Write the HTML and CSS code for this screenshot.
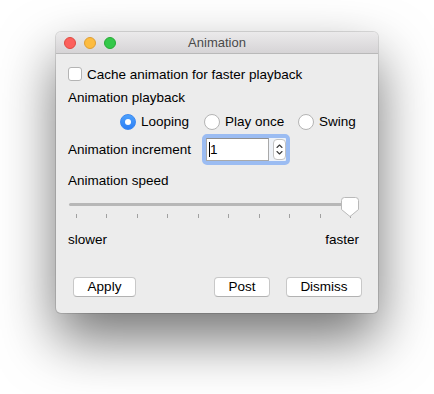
FILE: index.html
```html
<!DOCTYPE html>
<html>
<head>
<meta charset="utf-8">
<link rel="stylesheet" href="styles.css">
</head>
<body>
<div class="window">
  <div class="titlebar">
    <div class="lights">
      <span class="light red"></span>
      <span class="light yellow"></span>
      <span class="light green"></span>
    </div>
    <div class="title">Animation</div>
  </div>
  <div class="content">
    <div class="check-row">
      <span class="checkbox"></span>
      <span class="label">Cache animation for faster playback</span>
    </div>
    <div class="text-line playback">Animation playback</div>
    <div class="radios">
      <div class="radio-item"><span class="radio on"></span><span>Looping</span></div>
      <div class="radio-item"><span class="radio"></span><span>Play once</span></div>
      <div class="radio-item"><span class="radio"></span><span>Swing</span></div>
    </div>
    <div class="incr-row">
      <span class="incr-label">Animation increment</span>
      <div class="ring">
        <div class="field"><span class="caret-text">1</span></div>
        <div class="stepper">
          <svg width="11" height="19" viewBox="0 0 11 19">
            <path d="M3 7.5 L5.5 5 L8 7.5" fill="none" stroke="#3a3a3a" stroke-width="1.1" stroke-linecap="round" stroke-linejoin="round"/>
            <path d="M3 11.5 L5.5 14 L8 11.5" fill="none" stroke="#3a3a3a" stroke-width="1.1" stroke-linecap="round" stroke-linejoin="round"/>
          </svg>
        </div>
      </div>
    </div>
    <div class="text-line speed">Animation speed</div>
    <div class="slider">
      <div class="track"></div>
      <div class="ticks">
        <span></span><span></span><span></span><span></span><span></span>
        <span></span><span></span><span></span><span></span><span></span>
      </div>
      <svg class="thumb" width="18" height="21" viewBox="0 0 18 21">
        <path d="M3.5 0.5 H14.5 Q17.5 0.5 17.5 3.5 V12.5 L9 19.5 L0.5 12.5 V3.5 Q0.5 0.5 3.5 0.5 Z" fill="#ffffff" stroke="#b9b9b9" stroke-width="1"/>
      </svg>
    </div>
    <div class="scale-labels">
      <span>slower</span>
      <span>faster</span>
    </div>
    <div class="buttons">
      <button class="btn apply">Apply</button>
      <div class="btn-group">
        <button class="btn post">Post</button>
        <button class="btn dismiss">Dismiss</button>
      </div>
    </div>
  </div>
</div>
</body>
</html>
```

FILE: styles.css
```css
html, body {
  margin: 0;
  padding: 0;
  background: #ffffff;
}
html {
  height: 394px;
  overflow: hidden;
}
body {
  box-sizing: border-box;
  height: 394px;
  font-family: "Liberation Sans", Arial, sans-serif;
  font-size: 13.5px;
  color: #000000;
  padding: 32px 0 0 56px;
}
.window {
  width: 322px;
  height: 281px;
  box-sizing: border-box;
  background: #ececec;
  border-radius: 5px;
  overflow: hidden;
  box-shadow: 0 0 0 1px rgba(0,0,0,0.12), 0 26px 55px rgba(0,0,0,0.55);
}
.titlebar {
  height: 21px;
  border-bottom: 1px solid #b9b9b9;
  background: linear-gradient(#ebeaeb, #d6d4d6);
  display: flex;
  align-items: center;
  position: relative;
}
.lights {
  display: flex;
  gap: 8px;
  padding-left: 8px;
  padding-top: 1px;
}
.light {
  width: 12px;
  height: 12px;
  border-radius: 50%;
  box-sizing: border-box;
}
.red { background: #fc605c; border: 1px solid #de4a41; }
.yellow { background: #fdbc40; border: 1px solid #de9e34; }
.green { background: #34c84a; border: 1px solid #27aa35; }
.title {
  position: absolute;
  left: 0;
  right: 0;
  top: 0;
  height: 21px;
  line-height: 21px;
  text-align: center;
  color: #4a4a4a;
  font-size: 13px;
}
.content {
  padding: 0 12px;
}
.check-row {
  margin-top: 13px;
  display: flex;
  align-items: flex-start;
  height: 16px;
  line-height: 16px;
}
.checkbox {
  width: 14px;
  height: 14px;
  box-sizing: border-box;
  background: #ffffff;
  border: 1px solid #b4b4b4;
  border-radius: 3px;
  margin-right: 5px;
}
.text-line {
  line-height: 16px;
}
.playback { margin-top: 7px; }
.radios {
  margin-top: 8px;
  padding-left: 52px;
  display: grid;
  grid-template-columns: 84px 94px auto;
  line-height: 16px;
}
.radio-item {
  display: flex;
  align-items: center;
}
.radio {
  width: 16px;
  height: 16px;
  box-sizing: border-box;
  border-radius: 50%;
  background: #ffffff;
  border: 1px solid #b4b4b4;
  margin-right: 5px;
  position: relative;
}
.radio.on {
  background: linear-gradient(#4da1fc, #2d7ff5);
  border: 1px solid #3c88f0;
}
.radio.on::after {
  content: "";
  position: absolute;
  left: 4px;
  top: 4px;
  width: 6px;
  height: 6px;
  border-radius: 50%;
  background: #ffffff;
}
.incr-row {
  margin-top: 4px;
  display: flex;
  align-items: center;
  height: 31px;
}
.incr-label {
  width: 134px;
  line-height: 16px;
}
.ring {
  width: 88px;
  height: 31px;
  box-sizing: border-box;
  border: 4px solid #9bbcf2;
  border-radius: 5px;
  background: #eef2f8;
  display: flex;
  align-items: center;
}
.field {
  width: 63px;
  height: 23px;
  box-sizing: border-box;
  background: #ffffff;
  border: 1px solid #a9a9a9;
  border-top-color: #8f8f8f;
  line-height: 21px;
  padding-left: 2px;
}
.caret-text {
  border-left: 1px solid #000;
}
.stepper {
  margin-left: 4px;
  width: 13px;
  height: 21px;
  box-sizing: border-box;
  background: #ffffff;
  border: 1px solid #c2c2c2;
  border-radius: 4px;
  display: flex;
  align-items: center;
  justify-content: center;
}
.speed { margin-top: 8px; }
.slider {
  position: relative;
  margin-top: 4px;
  width: 291px;
  height: 29px;
}
.track {
  position: absolute;
  left: 1px;
  right: 2px;
  top: 10px;
  height: 3px;
  border-radius: 2px;
  background: #b7b7b7;
}
.ticks {
  position: absolute;
  left: 8px;
  right: 8px;
  top: 21px;
  display: flex;
  justify-content: space-between;
}
.ticks span {
  width: 1px;
  height: 4px;
  background: #a0a0a0;
}
.thumb {
  position: absolute;
  right: 0;
  top: 4px;
}
.scale-labels {
  margin-top: 10px;
  width: 291px;
  display: flex;
  justify-content: space-between;
  line-height: 16px;
}
.buttons {
  margin-top: 29px;
  display: flex;
  justify-content: space-between;
  padding-left: 5px;
  width: 289px;
}
.btn-group {
  display: flex;
  gap: 16px;
}
.btn {
  font-family: "Liberation Sans", Arial, sans-serif;
  font-size: 13.5px;
  color: #000;
  height: 20px;
  padding: 0;
  box-sizing: border-box;
  background: #ffffff;
  border: 1px solid #c8c8c8;
  border-bottom-color: #b2b2b2;
  border-radius: 4px;
  line-height: 18px;
}
.apply { width: 63px; }
.post { width: 56px; }
.dismiss { width: 76px; }
```
